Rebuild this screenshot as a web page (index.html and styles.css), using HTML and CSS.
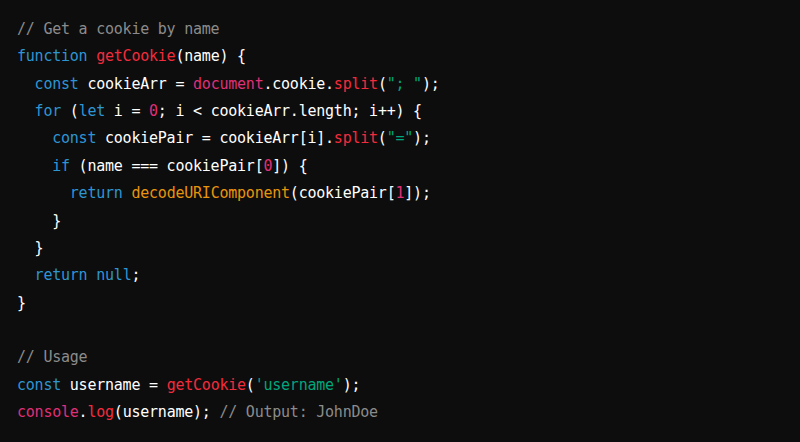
FILE: index.html
```html
<!DOCTYPE html>
<html>
<head>
<meta charset="utf-8">
<link rel="stylesheet" href="styles.css">
</head>
<body>
<pre class="code"><code><span class="c">// Get a cookie by name</span>
<span class="k">function</span> <span class="t">getCookie</span>(name) {
  <span class="k">const</span> cookieArr = <span class="v">document</span>.cookie.<span class="t">split</span>(<span class="s">"; "</span>);
  <span class="k">for</span> (<span class="k">let</span> i = <span class="n">0</span>; i &lt; cookieArr.length; i++) {
    <span class="k">const</span> cookiePair = cookieArr[i].<span class="t">split</span>(<span class="s">"="</span>);
    <span class="k">if</span> (name === cookiePair[<span class="n">0</span>]) {
      <span class="k">return</span> <span class="b">decodeURIComponent</span>(cookiePair[<span class="n">1</span>]);
    }
  }
  <span class="k">return</span> <span class="k">null</span>;
}

<span class="c">// Usage</span>
<span class="k">const</span> username = <span class="t">getCookie</span>(<span class="s">'username'</span>);
<span class="v">console</span>.<span class="t">log</span>(username); <span class="c">// Output: JohnDoe</span></code></pre>
</body>
</html>
```
FILE: styles.css
```css
html, body {
  margin: 0;
  padding: 0;
  background: #0d0d0d;
  width: 800px;
  height: 442px;
  overflow: hidden;
}
.code {
  margin: 0;
  padding: 16px 16px 0 17px;
  font-family: "DejaVu Sans Mono", "Liberation Mono", monospace;
  font-size: 15px;
  letter-spacing: -0.23px;
  line-height: 27.36px;
  color: #ffffff;
  white-space: pre;
}
.c { color: #8b8b8b; }
.k { color: #2e95d3; }
.t { color: #f22c3d; }
.v { color: #df3079; }
.n { color: #df3079; }
.s { color: #00a67d; }
.b { color: #e9950c; }
```
